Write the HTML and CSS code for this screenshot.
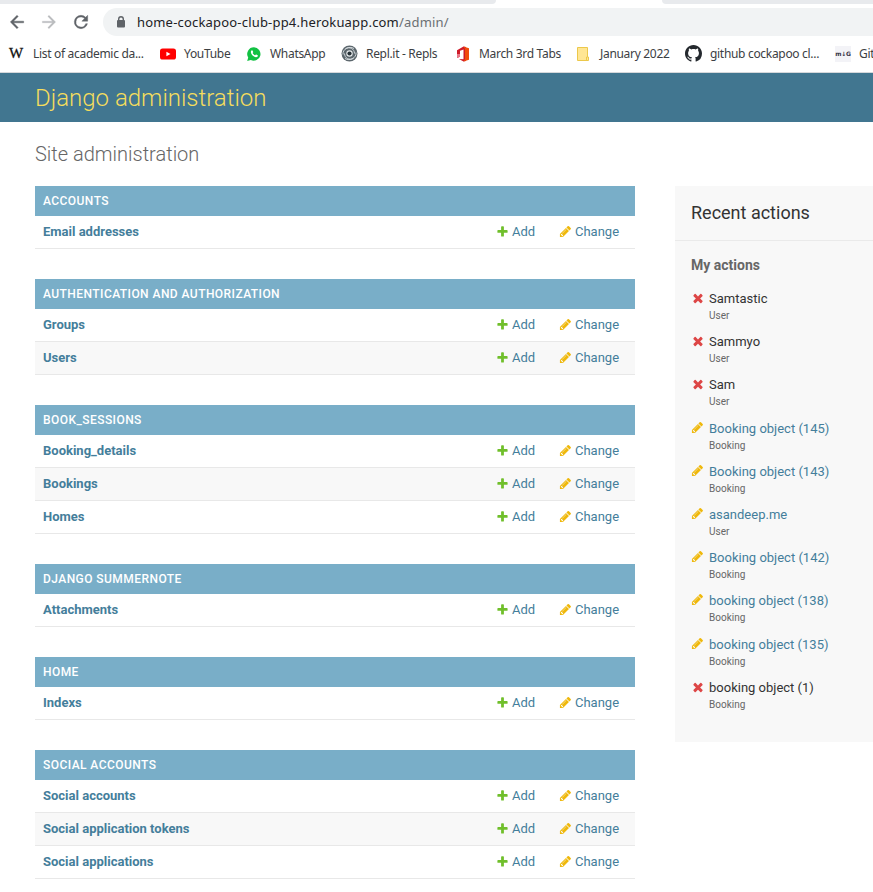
FILE: index.html
```
<!DOCTYPE html>
<html lang="en">
<head>
<meta charset="utf-8">
<title>Site administration | Django site admin</title>
<link rel="stylesheet" href="styles.css">
</head>
<body>
<svg width="0" height="0" class="sprite" aria-hidden="true">
  <symbol id="add" viewBox="0 0 1792 1792"><path fill="#70bf2b" d="M1600 796v192q0 40-28 68t-68 28h-416v416q0 40-28 68t-68 28h-192q-40 0-68-28t-28-68v-416h-416q-40 0-68-28t-28-68v-192q0-40 28-68t68-28h416v-416q0-40 28-68t68-28h192q40 0 68 28t28 68v416h416q40 0 68 28t28 68z"/></symbol>
  <symbol id="change" viewBox="0 0 1792 1792"><path fill="#efb80b" d="M491 1536l91-91-235-235-91 91v107h128v128h107zm523-928q0-22-22-22-10 0-17 7l-542 542q-7 7-7 17 0 22 22 22 10 0 17-7l542-542q7-7 7-17zm-54-192l416 416-832 832h-416v-416zm683 96q0 53-37 90l-166 166-416-416 166-165q36-38 90-38 53 0 91 38l235 234q37 39 37 91z"/></symbol>
  <symbol id="delete" viewBox="0 0 1792 1792"><path fill="#dd4646" d="M1490 1322q0 40-28 68l-136 136q-28 28-68 28t-68-28l-294-294-294 294q-28 28-68 28t-68-28l-136-136q-28-28-28-68t28-68l294-294-294-294q-28-28-28-68t28-68l136-136q28-28 68-28t68 28l294 294 294-294q28-28 68-28t68 28l136 136q28 28 28 68t-28 68l-294 294 294 294q28 28 28 68z"/></symbol>
</svg>

<div class="browser">
  <div class="tabs"><span class="tab-left"></span><span class="tab-right"></span></div>
  <div class="toolbar">
    <svg class="nav" viewBox="0 0 24 24"><path fill="#5f6368" stroke="#5f6368" stroke-width=".5" d="M20 11H7.83l5.59-5.59L12 4l-8 8 8 8 1.41-1.41L7.83 13H20v-2z"/></svg>
    <svg class="nav" viewBox="0 0 24 24"><path fill="#babcbe" stroke="#babcbe" stroke-width=".3" d="M12 4l-1.41 1.41L16.17 11H4v2h12.17l-5.58 5.59L12 20l8-8z"/></svg>
    <svg class="nav" viewBox="0 0 24 24"><path fill="#5f6368" stroke="#5f6368" stroke-width=".5" d="M17.65 6.35A7.96 7.96 0 0 0 12 4a8 8 0 1 0 7.73 10h-2.08A6 6 0 1 1 12 6c1.66 0 3.14.69 4.22 1.78L13 11h7V4z"/></svg>
    <div class="address">
      <svg class="lock" viewBox="0 0 10 12"><path fill="none" stroke="#5f6368" stroke-width="1.4" d="M2.7 5V3a2.3 2.3 0 0 1 4.6 0v2"/><rect x="1" y="4" width="8" height="7.5" rx="1" fill="#5f6368"/></svg>
      <span class="url">home-cockapoo-club-pp4.herokuapp.com<span class="path">/admin/</span></span>
    </div>
  </div>
  <div class="bookmarks">
    <div class="bookmark"><span class="wiki">W</span><span>List of academic da...</span></div>
    <div class="bookmark"><svg width="16" height="16" viewBox="0 0 16 16"><rect y="2.5" width="16" height="11" rx="2.6" fill="#f00"/><path fill="#fff" d="M6.4 5.7v4.6L10.5 8z"/></svg><span>YouTube</span></div>
    <div class="bookmark"><svg width="16" height="16" viewBox="0 0 16 16"><path fill="#12c143" d="M8 1.3A6.7 6.7 0 1 1 4.8 14L1.2 15l1-3.5A6.7 6.7 0 0 1 8 1.3z"/><path fill="#fff" d="M5.5 4.4c.5-.4 1-.2 1.2.4l.5 1.1c.1.4-.2.7-.6 1.1.6 1.1 1.3 1.8 2.5 2.3.6-.7.8-.9 1.2-.7l1.3.7c.5.2.3 1-.2 1.4-1.2 1-3 .3-4.5-.9C5.4 8.5 4 6 5.5 4.4z"/></svg><span>WhatsApp</span></div>
    <div class="bookmark"><svg width="17" height="17" viewBox="0 0 17 17"><circle cx="8.500" cy="8.500" r="8" fill="#5b666c"/><g fill="none" stroke="#dce2e5" stroke-width=".9"><path d="M2 9.500C1.500 4 8 .5 13 3.500M15 7.500c.5 5.500-6 9-11 6M4.500 3.800c4-2.500 9 0 9 4.700M12.500 13.200c-4 2.500-9 0-9-4.700"/></g><circle cx="8.500" cy="8.500" r="3.200" fill="#e8eced"/><circle cx="8.500" cy="8.500" r="2.100" fill="#273238"/></svg><span>Repl.it - Repls</span></div>
    <div class="bookmark office"><svg width="14" height="16" viewBox="0 0 14 16"><path fill="#ce1b29" d="M1 4.200L7.500.5 10 1v14l-2.500.5L3 13l4.500.3V3.600L4 4.700v6L1 12z"/><path fill="#f04b0b" d="M7.500.5L13 2.200v11.500l-5.500 1.800L9 13V3z"/><path fill="#e87686" d="M1 8h3v2.700L1 12z"/></svg><span>March 3rd Tabs</span></div>
    <div class="bookmark folder"><svg width="12" height="16" viewBox="0 0 12 16"><path fill="#ffe694" stroke="#ecc84b" d="M.5 1.500h10V11h1v3.500H.5zM9.500 14v-3h1"/></svg><span>January 2022</span></div>
    <div class="bookmark"><svg width="17" height="17" viewBox="0 0 16 16"><path fill="#24292e" d="M8 0C3.580 0 0 3.580 0 8c0 3.540 2.290 6.530 5.470 7.590.4.070.55-.17.55-.38 0-.19-.01-.82-.01-1.490-2.010.37-2.530-.49-2.690-.94-.09-.23-.48-.94-.82-1.130-.28-.15-.68-.52-.01-.53.63-.01 1.080.58 1.230.82.72 1.210 1.870.87 2.330.66.07-.52.28-.87.51-1.070-1.780-.2-3.640-.89-3.640-3.950 0-.87.31-1.590.82-2.150-.08-.2-.36-1.020.08-2.120 0 0 .67-.21 2.200.82.64-.18 1.320-.27 2-.27s1.360.09 2 .27c1.530-1.040 2.200-.82 2.200-.82.44 1.100.16 1.920.08 2.120.51.56.82 1.270.82 2.150 0 3.070-1.870 3.750-3.650 3.950.29.25.54.73.54 1.480 0 1.070-.01 1.930-.01 2.200 0 .21.15.46.55.38A8.010 8.010 0 0 0 16 8c0-4.420-3.580-8-8-8z"/></svg><span>github cockapoo cl...</span></div>
    <div class="bookmark"><span class="mg">m&#8595;G</span><span>Git</span></div>
  </div>
</div>

<header class="header"><div class="site-name">Django administration</div></header>

<main class="content">
  <h1>Site administration</h1>
  <div class="columns">
    <div class="modules" id="modules"></div>
    <aside class="sidebar">
      <h2>Recent actions</h2>
      <h3>My actions</h3>
      <ul id="actions"></ul>
    </aside>
  </div>
</main>
<script src="main.js"></script>
</body>
</html>
```
FILE: styles.css
```
* { box-sizing: border-box; }
body { margin: 0; width: 873px; height: 892px; overflow: hidden; background: #fff; color: #333; font: 13px/17px Roboto, "Liberation Sans", sans-serif; }
.sprite { display: block; }
.icon { width: 13px; height: 13px; flex: none; display: block; }

.browser { height: 73px; border-bottom: 1px solid #d5d8db; font-family: "Noto Sans", sans-serif; }
.tabs { height: 4px; display: flex; justify-content: space-between; }
.tab-left { width: 496px; background: #e8eaed; border-bottom-right-radius: 6px; }
.tab-right { width: 211px; background: #e8eaed; border-bottom-left-radius: 6px; }
.toolbar { height: 36px; padding: 4px 0 0 7px; display: flex; align-items: flex-start; }
.nav { width: 20px; height: 20px; margin: 4px 12px 0 0; flex: none; }
.address { flex: 1; height: 28px; background: #f1f3f4; border-radius: 14px 0 0 14px; display: flex; align-items: center; padding-left: 13px; }
.lock { width: 10px; height: 12px; margin-right: 11px; }
.url { font-size: 13px; line-height: 20px; letter-spacing: .19px; color: #202124; white-space: nowrap; }
.path { color: #6b6f73; }
.bookmarks { height: 28px; padding: 0 0 1px 9px; display: grid; grid-template-columns: 151px 86px 95px 115px 121px 108px 150px 60px; align-items: center; font-size: 12px; letter-spacing: -.31px; color: #3c4043; }
.bookmark { display: flex; align-items: center; gap: 8px; white-space: nowrap; line-height: 17px; }
.office { gap: 9px; }
.folder { gap: 11px; }
.wiki { width: 16px; font: 15px/17px "Liberation Serif", serif; color: #111; -webkit-text-stroke: .3px #111; }
.mg { width: 16px; height: 16px; background: #f3f3f7; font: bold 6px/16px "DejaVu Sans", sans-serif; color: #334; text-align: center; }

.header { height: 49px; background: #417690; padding: 11px 35px 9px; }
.site-name { font-size: 24px; line-height: 29px; font-weight: 300; color: #f5dd5d; }
.content { padding: 20px 0 0 35px; }
h1 { margin: 0 0 20px; font-size: 20px; line-height: 24px; font-weight: 300; color: #666; }
.columns { display: flex; align-items: flex-start; gap: 40px; }
.modules { width: 600px; flex: none; }
.module { margin-bottom: 30px; }
.module h2 { margin: 0; height: 30px; padding: 0 8px; background: #79aec8; color: #fff; font-size: 12px; line-height: 30px; font-weight: 500; letter-spacing: .44px; text-transform: uppercase; }
.row { height: 33px; padding: 0 8px 2px; display: grid; grid-template-columns: 1fr 63px 68px; align-items: center; border-bottom: 1px solid #e8e8e8; color: #447e9b; }
.row:nth-child(odd) { background: #f8f8f8; }
.row b { font-weight: 700; }
.link { display: flex; align-items: center; gap: 3px; }
.sidebar { width: 240px; flex: none; height: 556px; background: #f8f8f8; }
.sidebar h2 { margin: 0; height: 55px; padding: 16px; border-bottom: 1px solid #eaeaea; font-size: 18px; line-height: 22px; font-weight: 400; }
.sidebar h3 { margin: 16px 16px 15px; font-size: 14px; line-height: 17px; font-weight: 700; color: #666; }
.sidebar ul { margin: 0; padding: 0 16px; list-style: none; }
.action { height: 43.2px; display: flex; gap: 5px; padding-top: 1px; }
.action .icon { margin-top: 1px; }
.deleted .icon { width: 14px; height: 14px; margin-right: -1px; }
.name { display: block; color: #447e9b; }
.deleted .name { color: #333; }
.kind { display: block; font-size: 10px; line-height: 17px; color: #666; }
```
FILE: main.js
```
const icon = name => `<svg class="icon"><use href="#${name}"/></svg>`;

const modules = [
  ["Accounts", ["Email addresses"]],
  ["Authentication and Authorization", ["Groups", "Users"]],
  ["Book_Sessions", ["Booking_details", "Bookings", "Homes"]],
  ["Django Summernote", ["Attachments"]],
  ["Home", ["Indexs"]],
  ["Social Accounts", ["Social accounts", "Social application tokens", "Social applications"]]
];

document.getElementById("modules").innerHTML = modules.map(([title, models]) =>
  `<section class="module"><h2>${title}</h2>${models.map(model =>
    `<div class="row"><b>${model}</b><span class="link">${icon("add")}Add</span><span class="link">${icon("change")}Change</span></div>`
  ).join("")}</section>`
).join("");

const actions = [
  ["delete", "Samtastic", "User"],
  ["delete", "Sammyo", "User"],
  ["delete", "Sam", "User"],
  ["change", "Booking object (145)", "Booking"],
  ["change", "Booking object (143)", "Booking"],
  ["change", "asandeep.me", "User"],
  ["change", "Booking object (142)", "Booking"],
  ["change", "booking object (138)", "Booking"],
  ["change", "booking object (135)", "Booking"],
  ["delete", "booking object (1)", "Booking"]
];

document.getElementById("actions").innerHTML = actions.map(([type, name, kind]) =>
  `<li class="action${type === "delete" ? " deleted" : ""}">${icon(type)}<div><span class="name">${name}</span><span class="kind">${kind}</span></div></li>`
).join("");
```
